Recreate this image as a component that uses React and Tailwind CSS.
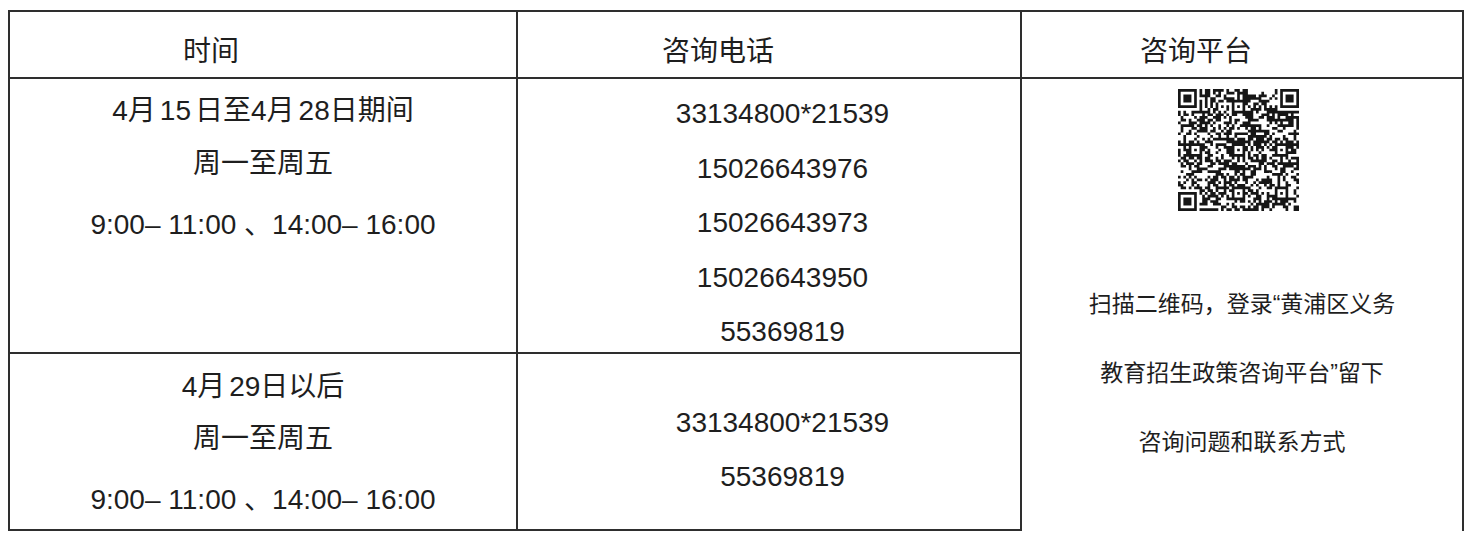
import React from "react";

function mulberry32(a) {
  return function () {
    a |= 0;
    a = (a + 0x6d2b79f5) | 0;
    let t = Math.imul(a ^ (a >>> 15), 1 | a);
    t = (t + Math.imul(t ^ (t >>> 7), 61 | t)) ^ t;
    return ((t ^ (t >>> 14)) >>> 0) / 4294967296;
  };
}

function buildQR() {
  const N = 45;
  const rnd = mulberry32(20240415);
  const m = [];
  for (let y = 0; y < N; y++) {
    const row = [];
    for (let x = 0; x < N; x++) row.push(rnd() < 0.54);
    m.push(row);
  }
  const finder = (fx, fy) => {
    for (let dy = -1; dy <= 7; dy++) {
      for (let dx = -1; dx <= 7; dx++) {
        const x = fx + dx;
        const y = fy + dy;
        if (x < 0 || y < 0 || x >= N || y >= N) continue;
        let v = false;
        if (dx >= 0 && dx <= 6 && dy >= 0 && dy <= 6) {
          v =
            dx === 0 || dx === 6 || dy === 0 || dy === 6 ||
            (dx >= 2 && dx <= 4 && dy >= 2 && dy <= 4);
        }
        m[y][x] = v;
      }
    }
  };
  finder(0, 0);
  finder(N - 7, 0);
  finder(0, N - 7);
  for (let i = 8; i < N - 8; i++) {
    m[6][i] = i % 2 === 0;
    m[i][6] = i % 2 === 0;
  }
  const centers = [
    [22, 6], [6, 22], [22, 22], [38, 22], [22, 38], [38, 38],
  ];
  centers.forEach(([cx, cy]) => {
    for (let dy = -2; dy <= 2; dy++) {
      for (let dx = -2; dx <= 2; dx++) {
        m[cy + dy][cx + dx] = Math.max(Math.abs(dx), Math.abs(dy)) !== 1;
      }
    }
  });
  let d = "";
  for (let y = 0; y < N; y++) {
    for (let x = 0; x < N; x++) {
      if (m[y][x]) d += `M${x} ${y}h1v1h-1z`;
    }
  }
  return d;
}

const QR_PATH = buildQR();

function QRCode() {
  return (
    <svg
      width="121"
      height="122"
      viewBox="0 0 45 45"
      preserveAspectRatio="none"
      className="block"
    >
      <rect width="45" height="45" fill="#fff" />
      <path d={QR_PATH} fill="#161616" />
    </svg>
  );
}

function Gap() {
  return <span className="inline-block w-[4px]" />;
}

export default function App() {
  return (
    <div className="w-[1473px] h-[542px] bg-white pt-[10px] pl-[8px] text-[#1e1e1e] font-['Liberation_Sans','Noto_Sans_CJK_SC',sans-serif]">
      <div className="grid w-[1456px] grid-cols-[508px_504px_442px] grid-rows-[67px_275px_177px] border-l-2 border-t-2 border-[#2e2e2e]">
        {/* header */}
        <div className="flex items-center justify-center border-r-2 border-b-2 border-[#2e2e2e] pt-[15px] pr-[104px] text-[28px]">
          时间
        </div>
        <div className="flex items-center justify-center border-r-2 border-b-2 border-[#2e2e2e] pt-[15px] pr-[102px] text-[28px]">
          咨询电话
        </div>
        <div className="flex items-center justify-center border-r-2 border-b-2 border-[#2e2e2e] pt-[15px] pr-[92px] text-[28px]">
          咨询平台
        </div>

        {/* row 1 col 1 */}
        <div className="flex flex-col items-center border-r-2 border-b-2 border-[#2e2e2e] pt-[5px] text-[28px]">
          <div className="leading-[53px]">
            4月<Gap />15<Gap />日至4月<Gap />28日期间
          </div>
          <div className="leading-[53px]">周一至周五</div>
          <div className="mt-[8px] leading-[53px]">9:00– 11:00 、14:00– 16:00</div>
        </div>

        {/* row 1 col 2 */}
        <div className="flex flex-col items-center border-r-2 border-b-2 border-[#2e2e2e] pt-[8px] pl-[27px] text-[28px] leading-[54.5px]">
          <div>33134800*21539</div>
          <div>15026643976</div>
          <div>15026643973</div>
          <div>15026643950</div>
          <div>55369819</div>
        </div>

        {/* col 3 spanning rows */}
        <div className="row-span-2 flex flex-col items-center border-r-2 border-[#2e2e2e] pt-[10px]">
          <div className="pr-[8px]">
            <QRCode />
          </div>
          <div className="mt-[59px] flex flex-col items-center text-[23px] leading-[69px]">
            <div>扫描二维码，登录“黄浦区义务</div>
            <div>教育招生政策咨询平台”留下</div>
            <div>咨询问题和联系方式</div>
          </div>
        </div>

        {/* row 2 col 1 */}
        <div className="flex flex-col items-center border-r-2 border-b-2 border-[#2e2e2e] pt-[8px] text-[28px]">
          <div className="leading-[50px]">
            4月<Gap />29日以后
          </div>
          <div className="leading-[53px]">周一至周五</div>
          <div className="mt-[8px] leading-[53px]">9:00– 11:00 、14:00– 16:00</div>
        </div>

        {/* row 2 col 2 */}
        <div className="flex flex-col items-center border-r-2 border-b-2 border-[#2e2e2e] pt-[42px] pl-[27px] text-[28px] leading-[54px]">
          <div>33134800*21539</div>
          <div>55369819</div>
        </div>
      </div>
    </div>
  );
}
